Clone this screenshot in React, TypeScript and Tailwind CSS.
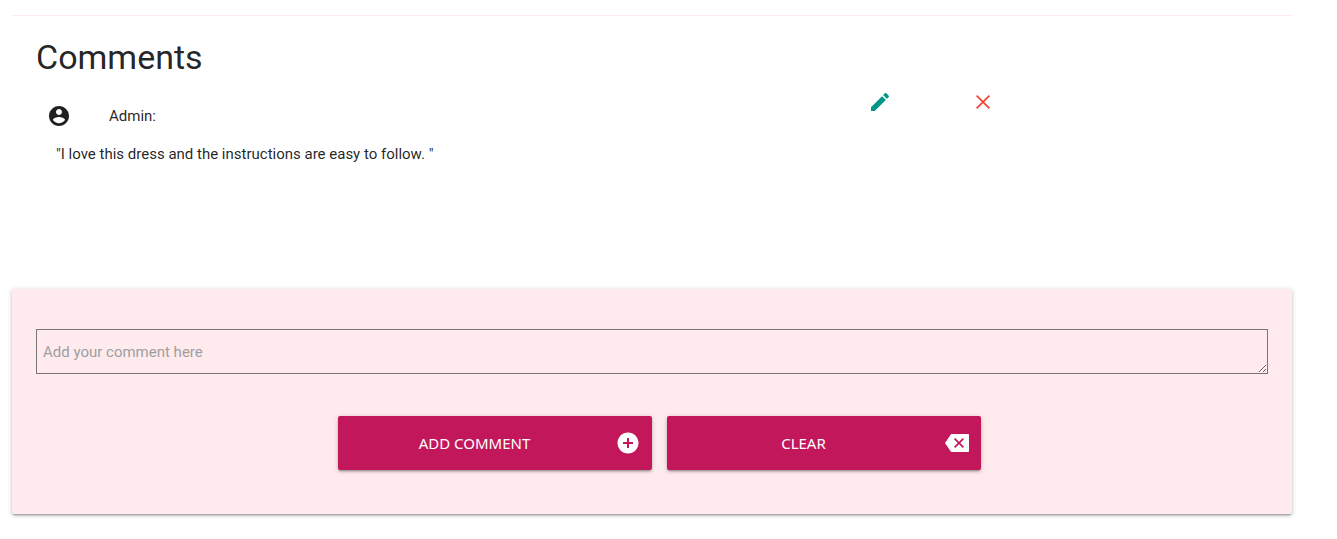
import React from "react";

function Icon({ d, className }: { d: string; className: string }) {
  return (
    <svg viewBox="0 0 24 24" fill="currentColor" aria-hidden="true" className={className}>
      <path d={d} />
    </svg>
  );
}

const icons = {
  account:
    "M12 2C6.48 2 2 6.48 2 12s4.48 10 10 10 10-4.48 10-10S17.52 2 12 2zm0 3c1.66 0 3 1.34 3 3s-1.34 3-3 3-3-1.34-3-3 1.34-3 3-3zm0 14.2c-2.5 0-4.71-1.28-6-3.22.03-1.99 4-3.08 6-3.08 1.99 0 5.97 1.09 6 3.08-1.29 1.94-3.5 3.22-6 3.22z",
  edit: "M3 17.25V21h3.75L17.81 9.94l-3.75-3.75L3 17.25zM20.71 7.04c.39-.39.39-1.02 0-1.41l-2.34-2.34c-.39-.39-1.02-.39-1.41 0l-1.83 1.83 3.75 3.75 1.83-1.83z",
  close:
    "M19 6.2L17.8 5 12 10.8 6.2 5 5 6.2 10.8 12 5 17.8 6.2 19 12 13.2 17.8 19 19 17.8 13.2 12z",
  add: "M12 1.5C6.2 1.5 1.5 6.2 1.5 12S6.2 22.5 12 22.5 22.5 17.8 22.5 12 17.8 1.5 12 1.5zm5 11.5h-4v4h-2v-4H7v-2h4V7h2v4h4v2z",
  backspace:
    "M23 3H7c-.69 0-1.23.35-1.59.88L0 12l5.41 8.11c.36.53.9.89 1.59.89h16c.6 0 1-.4 1-1V4c0-.6-.4-1-1-1zm-4 12.8L17.8 17 14 13.2 10.2 17 9 15.8 12.8 12 9 8.2 10.2 7 14 10.8 17.8 7 19 8.2 15.2 12z",
};

const buttonClass =
  "flex h-[54px] w-[314px] items-center gap-1 rounded-[2px] bg-[#c2185b] pr-3 font-['Noto_Sans',sans-serif] text-[15px] text-white uppercase shadow-[0_2px_2px_0_rgba(0,0,0,0.14),0_3px_1px_-2px_rgba(0,0,0,0.12),0_1px_5px_0_rgba(0,0,0,0.2)]";

export default function App() {
  return (
    <main className="bg-white pt-[15px] pr-[45px] pb-6 pl-3 font-['Roboto',sans-serif] text-[15px] leading-[22px] text-black/87">
      <section className="border-t border-[#ffebee] px-6 pt-[22px]">
        <h1 className="text-[34px] leading-[38px]">Comments</h1>
        <div className="flex items-start pt-3.5 pl-[11px]">
          <Icon d={icons.account} className="mt-3.5 size-6" />
          <p className="mt-3.5 ml-[38px] flex-1 leading-6">Admin:</p>
          <div className="flex w-[436px] gap-[79px] pl-9">
            <button type="button" aria-label="Edit comment" className="text-[#009688]">
              <Icon d={icons.edit} className="size-6" />
            </button>
            <button type="button" aria-label="Delete comment" className="text-[#f44336]">
              <Icon d={icons.close} className="size-6" />
            </button>
          </div>
        </div>
        <p className="mt-[15px] pl-5">"I love this dress and the instructions are easy to follow. "</p>
      </section>
      <form className="mt-[124px] rounded-[2px] bg-[#ffebee] px-6 pt-10 pb-11 shadow-[0_2px_2px_0_rgba(0,0,0,0.14),0_3px_1px_-2px_rgba(0,0,0,0.12),0_1px_5px_0_rgba(0,0,0,0.2)]">
        <textarea
          aria-label="Comment"
          placeholder="Add your comment here"
          className="block h-[45px] w-full border border-[#767676] bg-transparent px-1.5 pt-[11px] placeholder:text-[#9e9e9e]"
        />
        <div className="mt-[42px] flex justify-center gap-[15px] pl-3.5">
          <button type="button" className={buttonClass}>
            <span className="flex-1">Add comment</span>
            <Icon d={icons.add} className="size-6" />
          </button>
          <button type="reset" className={buttonClass}>
            <span className="flex-1">Clear</span>
            <Icon d={icons.backspace} className="size-6" />
          </button>
        </div>
      </form>
    </main>
  );
}
